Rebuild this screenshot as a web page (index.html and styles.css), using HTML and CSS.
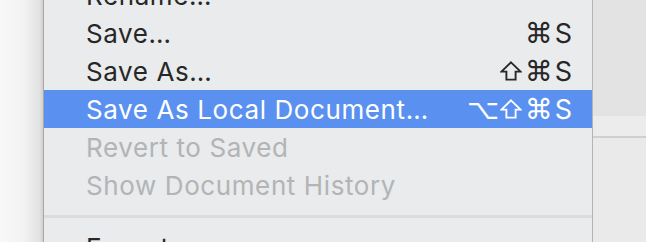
FILE: index.html
```html
<!DOCTYPE html>
<html>
<head>
<meta charset="utf-8">
<link rel="stylesheet" href="styles.css">
</head>
<body>
<div class="screen">
  <div class="left-bg"></div>
  <div class="menu">
    <div class="item"><span class="label">Rename…</span></div>
    <div class="item"><span class="label">Save…</span><span class="keys"><span class="k">⌘</span><span class="k s">S</span></span></div>
    <div class="item"><span class="label">Save As…</span><span class="keys"><span class="k"><svg class="shift" width="22" height="20" viewBox="0 0 22 20"><path d="M11 1.4 L20.6 10.6 H15.6 V18.6 H6.4 V10.6 H1.4 Z" fill="none" stroke="currentColor" stroke-width="1.9" stroke-linejoin="miter"/></svg></span><span class="k">⌘</span><span class="k s">S</span></span></div>
    <div class="item active"><span class="label">Save As Local Document…</span><span class="keys"><span class="k">⌥</span><span class="k"><svg class="shift" width="22" height="20" viewBox="0 0 22 20"><path d="M11 1.4 L20.6 10.6 H15.6 V18.6 H6.4 V10.6 H1.4 Z" fill="none" stroke="currentColor" stroke-width="1.9" stroke-linejoin="miter"/></svg></span><span class="k">⌘</span><span class="k s">S</span></span></div>
    <div class="item disabled"><span class="label">Revert to Saved</span></div>
    <div class="item disabled"><span class="label">Show Document History</span></div>
    <div class="sep"></div>
    <div class="item"><span class="label">Export</span><svg class="arrow" width="12" height="14" viewBox="0 0 12 14"><path d="M1 0 L11 7 L1 14 Z" fill="#1e1e1e"/></svg></div>
  </div>
  <div class="right-bg">
    <div class="band-top"></div>
    <div class="band-mid"></div>
    <div class="band-line"></div>
    <div class="band-bottom"></div>
  </div>
</div>
</body>
</html>
```
FILE: styles.css
```css
html, body {
  margin: 0;
  padding: 0;
  width: 646px;
  height: 242px;
  overflow: hidden;
  background: #f6f6f6;
}
.screen {
  display: flex;
  width: 646px;
  height: 242px;
  overflow: hidden;
}
.left-bg {
  width: 43px;
  flex: none;
  background: linear-gradient(to right, #f8f8f8 0%, #f3f3f3 55%, #e2e2e2 92%, #cfcfcf 100%);
}
.menu {
  width: 548px;
  flex: none;
  background: #e9ebed;
  border-left: 1px solid #a9a9a9;
  border-right: 1px solid #b4b4b4;
  display: flex;
  flex-direction: column;
  margin-top: -24px;
  font-family: Inter, "Noto Sans", sans-serif;
  font-size: 26px;
  color: #272727;
}
.item {
  height: 38px;
  flex: none;
  display: flex;
  align-items: center;
  justify-content: space-between;
  padding: 0 20px 0 42px;
  letter-spacing: 0.6px;
}
.item.active {
  background: #5a90ef;
  color: #ffffff;
}
.item.disabled {
  color: #b2b4b6;
}
.keys {
  display: flex;
  align-items: center;
}
.k {
  font-family: "DejaVu Sans", sans-serif;
  font-size: 28px;
  width: 28px;
  height: 38px;
  display: flex;
  align-items: center;
  justify-content: center;
  letter-spacing: 0;
}
.k.s {
  font-family: Inter, sans-serif;
  font-size: 27px;
  width: 19px;
  justify-content: flex-end;
}
.shift {
  display: block;
  margin-top: 0;
}
.sep {
  height: 24px;
  flex: none;
  display: flex;
  align-items: center;
}
.sep::before {
  content: "";
  display: block;
  width: 100%;
  height: 3px;
  background: #d9dbdc;
}
.arrow {
  margin-right: 10px;
  margin-top: 6px;
}
.right-bg {
  flex: 1;
  display: flex;
  flex-direction: column;
  box-shadow: inset 10px 0 12px -6px rgba(0,0,0,0.12);
}
.band-top {
  height: 116px;
  background: #e3e3e3;
}
.band-mid {
  height: 20px;
  background: #ececec;
}
.band-line {
  height: 2px;
  background: #cfcfcf;
}
.band-bottom {
  flex: 1;
  background: #eaeaea;
}
```
